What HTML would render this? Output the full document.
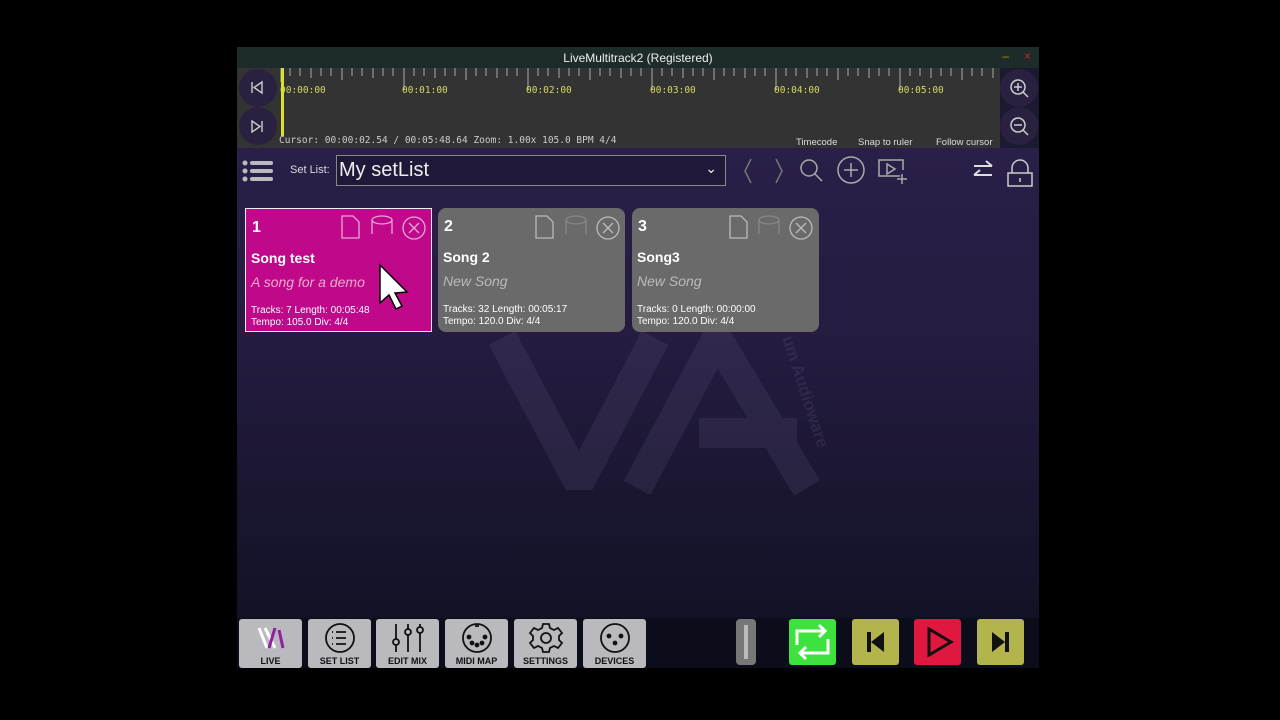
<!DOCTYPE html><html><head><style>
*{margin:0;padding:0;box-sizing:border-box}
body{width:1280px;height:720px;background:#000;position:relative;overflow:hidden;font-family:"Liberation Sans","DejaVu Sans",sans-serif}
.a{position:absolute}
.title{left:237px;top:47px;width:802px;height:21px;background:#1e2b2b;color:#eee;font-size:12px;text-align:center;line-height:23px}
.tl{left:237px;top:68px;width:802px;height:80px;background:#333}
.circ{position:absolute;width:38px;height:38px;border-radius:50%;background:#2a2140}
.ts{position:absolute;top:92px;font-family:"DejaVu Sans Mono",monospace;font-size:9.5px;color:#d8d860}
.main{left:237px;top:148px;width:802px;height:470px;background:linear-gradient(#2a1f48,#251c40 40%,#121226)}
.bot{left:237px;top:618px;width:802px;height:50px;background:#0b0d1a}
.card{position:absolute;top:208px;width:187px;height:124px;border-radius:8px;background:#6a6a6a;color:#fff}
.card .n{position:absolute;left:6px;top:10px;font-weight:bold;font-size:16px}
.card .t{position:absolute;left:5px;top:41px;font-weight:bold;font-size:14px}
.card .d{position:absolute;left:5px;top:65px;font-style:italic;font-size:14px;color:#bbb}
.card .i{position:absolute;left:5px;top:96px;font-size:10px;line-height:12px}
.nb{position:absolute;top:619px;width:63px;height:49px;background:#b9b9be;border-radius:3px;text-align:center;font-size:9px;font-weight:bold;color:#111}
.nb span{position:absolute;bottom:2px;left:0;right:0}
.tb{position:absolute;top:619px;width:47px;height:46px;border-radius:3px}
</style></head><body>
<div class="a title">LiveMultitrack2 (Registered)<span style="position:absolute;right:30px;top:-2px;color:#a90">–</span><span style="position:absolute;right:8px;top:-2px;color:#c22">×</span></div>
<div class="a tl">
<svg class="a" style="left:43px;top:0" width="720" height="30">
<g stroke="#aaa" stroke-width="1">
<path d="M0 0V14M10 0V8M20 0V8M31 0V10M41 0V8M51 0V8M62 0V12M72 0V8M82 0V8M93 0V10M103 0V8M113 0V8M124 0V22M134 0V8M144 0V8M155 0V10M165 0V8M175 0V8M186 0V12M196 0V8M206 0V8M217 0V10M227 0V8M237 0V8M248 0V22M258 0V8M268 0V8M279 0V10M289 0V8M299 0V8M310 0V12M320 0V8M330 0V8M341 0V10M351 0V8M361 0V8M372 0V22M382 0V8M392 0V8M403 0V10M413 0V8M423 0V8M434 0V12M444 0V8M454 0V8M465 0V10M475 0V8M485 0V8M496 0V22M506 0V8M516 0V8M527 0V10M537 0V8M547 0V8M558 0V12M568 0V8M578 0V8M589 0V10M599 0V8M609 0V8M620 0V22M630 0V8M640 0V8M651 0V10M661 0V8M671 0V8M682 0V12M692 0V8M702 0V8M713 0V10"/></g></svg>
<div class="a" style="left:44px;top:0;width:3px;height:68px;background:#d8e030"></div>
<span class="ts" style="left:43px;top:17px">00:00:00</span><span class="ts" style="left:165px;top:17px">00:01:00</span><span class="ts" style="left:289px;top:17px">00:02:00</span><span class="ts" style="left:413px;top:17px">00:03:00</span><span class="ts" style="left:537px;top:17px">00:04:00</span><span class="ts" style="left:661px;top:17px">00:05:00</span>
<div class="circ" style="left:2px;top:1px"></div><div class="circ" style="left:2px;top:39px"></div>
<div class="a" style="left:763px;top:0;width:39px;height:80px;background:#1c1a30"></div>
<div class="circ" style="left:763px;top:1px"></div><div class="circ" style="left:763px;top:39px"></div>
<svg class="a" style="left:12px;top:12px" width="16" height="56" fill="none" stroke="#ccc" stroke-width="1.4"><path d="M3 2v11M13 2L5 7.5 13 13z"/><path d="M13 41v11M3 41l8 5.5-8 5.5z"/></svg>
<svg class="a" style="left:771px;top:9px" width="24" height="62" fill="none" stroke="#ccc" stroke-width="1.5"><circle cx="10" cy="10" r="7"/><path d="M15 15l5 5M10 6v8M6 10h8"/><circle cx="10" cy="48" r="7"/><path d="M15 53l5 5M6 48h8"/></svg>
<div class="a" style="left:42px;top:67px;font-family:'DejaVu Sans Mono',monospace;font-size:9.5px;color:#ccc">Cursor: 00:00:02.54 / 00:05:48.64 Zoom: 1.00x 105.0 BPM 4/4</div>
<div class="a" style="left:559px;top:69px;font-size:9.5px;color:#ddd">Timecode</div>
<div class="a" style="left:621px;top:69px;font-size:9.5px;color:#ddd">Snap to ruler</div>
<div class="a" style="left:699px;top:69px;font-size:9.5px;color:#ddd">Follow cursor</div>
</div>
<div class="a main">
<svg class="a" style="left:5px;top:12px" width="32" height="22" fill="#bbb"><circle cx="3" cy="3" r="2.5"/><circle cx="3" cy="11" r="2.5"/><circle cx="3" cy="19" r="2.5"/><rect x="8" y="1" width="23" height="4" rx="2"/><rect x="8" y="9" width="23" height="4" rx="2"/><rect x="8" y="17" width="23" height="4" rx="2"/></svg>
<div class="a" style="left:53px;top:16px;color:#ddd;font-size:11px">Set List:</div>
<div class="a" style="left:99px;top:7px;width:390px;height:31px;border:1px solid #888;background:#201838;color:#eee;font-size:20px;padding:2px 2px;line-height:24px">My setList<span style="position:absolute;right:8px;top:0;font-size:14px">⌄</span></div>
<svg class="a" style="left:505px;top:8px" width="295" height="32" fill="none" stroke="#aaa" stroke-width="1.5"><path d="M9 3L3 15L9 27M34 3L40 15L34 27" stroke="#777"/><circle cx="67" cy="12" r="8"/><path d="M73 18l7 7"/><circle cx="109" cy="14" r="13"/><path d="M109 7v14M102 14h14"/><path d="M158 20H137V4H161V14M145 8v10l8-5z M160 18v10M155 23h10"/><path d="M232 10h18M244 5l6 5M250 19h-18M238 14l-6 5" stroke="#ddd" stroke-width="2"/><path d="M266 17h24v13h-24zM270 17v-5a8 8 0 0116 0v5M278 22v4" stroke="#ccc"/></svg>
<svg class="a" style="left:0;top:0" width="802" height="470" fill="none" stroke="rgba(130,120,165,0.13)" stroke-width="30" stroke-linejoin="bevel"><path d="M265 190L342 335L418 190"/><path d="M400 340L480 190L570 340M462 285H560"/>
<text x="0" y="0" transform="translate(545 190) rotate(72)" font-size="17" font-weight="bold" fill="rgba(130,120,165,0.16)" stroke="none" font-family="Liberation Sans">um Audioware</text></svg>
</div>
<div class="card" style="left:245px;background:#c0088a;border:1.5px solid #eee;border-radius:0">
<div class="n">1</div><div class="t">Song test</div><div class="d" style="color:#eac">A song for a demo</div><div class="i">Tracks: 7 Length: 00:05:48<br>Tempo: 105.0 Div: 4/4</div></div>
<div class="card" style="left:438px"><div class="n">2</div><div class="t">Song 2</div><div class="d">New Song</div><div class="i">Tracks: 32 Length: 00:05:17<br>Tempo: 120.0 Div: 4/4</div></div>
<div class="card" style="left:632px"><div class="n">3</div><div class="t">Song3</div><div class="d">New Song</div><div class="i">Tracks: 0 Length: 00:00:00<br>Tempo: 120.0 Div: 4/4</div></div>
<svg class="a" style="left:0;top:0" width="1280" height="720" fill="none" stroke-width="1.3">
<g stroke="#e8a8d8"><path d="M342 216h11l6 6v16h-17z"/><ellipse cx="382" cy="220" rx="10" ry="4"/><path d="M372 220v14M392 220v14"/><circle cx="414" cy="228" r="11"/><path d="M409 223l10 10M419 223l-10 10"/></g>
<g stroke="#bbb"><path d="M536 216h11l6 6v16h-17z"/><path d="M730 216h11l6 6v16h-17z"/><circle cx="608" cy="228" r="11"/><path d="M603 223l10 10M613 223l-10 10"/><circle cx="801" cy="228" r="11"/><path d="M796 223l10 10M806 223l-10 10"/></g>
<g stroke="#888"><ellipse cx="576" cy="220" rx="10" ry="4"/><path d="M566 220v14M586 220v14"/><ellipse cx="769" cy="220" rx="10" ry="4"/><path d="M759 220v14M779 220v14"/></g>
<path d="M380 265v38l9-8 7 14 6-3-7-13 12-1z" fill="#fff" stroke="#000" stroke-width="1.5"/>
</svg>
<div class="a bot"></div>
<div class="nb" style="left:239px"><svg width="40" height="30" style="margin-top:5px"><path d="M8 4l8 20M14 4l10 20" stroke="#fff" stroke-width="3"/><path d="M24 4l-6 20M28 6l4 18" stroke="#9020a0" stroke-width="3"/></svg><span>LIVE</span></div>
<div class="nb" style="left:308px"><svg width="40" height="32" style="margin-top:3px" fill="none" stroke="#111" stroke-width="1.8"><circle cx="20" cy="16" r="14"/><path d="M16 10h10M16 16h10M16 22h10M12 10h1M12 16h1M12 22h1"/></svg><span>SET LIST</span></div>
<div class="nb" style="left:376px"><svg width="44" height="32" style="margin-top:3px" fill="none" stroke="#111" stroke-width="1.8"><path d="M10 2v28M22 2v28M34 2v28"/><circle cx="10" cy="20" r="3" fill="#b9b9be"/><circle cx="22" cy="10" r="3" fill="#b9b9be"/><circle cx="34" cy="8" r="3" fill="#b9b9be"/></svg><span>EDIT MIX</span></div>
<div class="nb" style="left:445px"><svg width="40" height="32" style="margin-top:3px" fill="none" stroke="#111" stroke-width="1.8"><circle cx="20" cy="16" r="14"/><circle cx="12" cy="15" r="1.5" fill="#111"/><circle cx="28" cy="15" r="1.5" fill="#111"/><circle cx="15" cy="21" r="1.5" fill="#111"/><circle cx="25" cy="21" r="1.5" fill="#111"/><circle cx="20" cy="23" r="1.5" fill="#111"/><path d="M18 4h4"/></svg><span>MIDI MAP</span></div>
<div class="nb" style="left:514px"><svg width="40" height="32" style="margin-top:3px" fill="none" stroke="#111" stroke-width="1.8"><circle cx="20" cy="16" r="5"/><path d="M17 2h6l1 4 4 2 4-2 4 5-3 3v4l3 3-4 5-4-2-4 2-1 4h-6l-1-4-4-2-4 2-4-5 3-3v-4l-3-3 4-5 4 2 4-2z"/></svg><span>SETTINGS</span></div>
<div class="nb" style="left:583px"><svg width="40" height="32" style="margin-top:3px" fill="none" stroke="#111" stroke-width="1.8"><circle cx="20" cy="16" r="14"/><circle cx="14" cy="14" r="1.5" fill="#111"/><circle cx="26" cy="14" r="1.5" fill="#111"/><circle cx="20" cy="21" r="1.5" fill="#111"/></svg><span>DEVICES</span></div>
<div class="a" style="left:736px;top:619px;width:20px;height:46px;background:#777;border-radius:4px"><div style="margin:6px auto;width:4px;height:34px;background:#bbb"></div></div>
<div class="tb" style="left:789px;background:#3ee23e"><svg width="47" height="46" fill="none" stroke="#fff" stroke-width="3"><path d="M8 26V12h28M30 6l6 6-6 6M39 20v14H11M17 28l-6 6 6 6"/></svg></div>
<div class="tb" style="left:852px;background:#b4b44c"><svg width="47" height="46"><path d="M15 13h4v20h-4zM32 13v20l-13-10z" fill="#111"/></svg></div>
<div class="tb" style="left:914px;background:#e01840"><svg width="47" height="46" fill="none" stroke="#111" stroke-width="3"><path d="M15 10v26l22-13z"/></svg></div>
<div class="tb" style="left:977px;background:#b4b44c"><svg width="47" height="46"><path d="M28 13h4v20h-4zM15 13v20l13-10z" fill="#111"/></svg></div>
</body></html>
